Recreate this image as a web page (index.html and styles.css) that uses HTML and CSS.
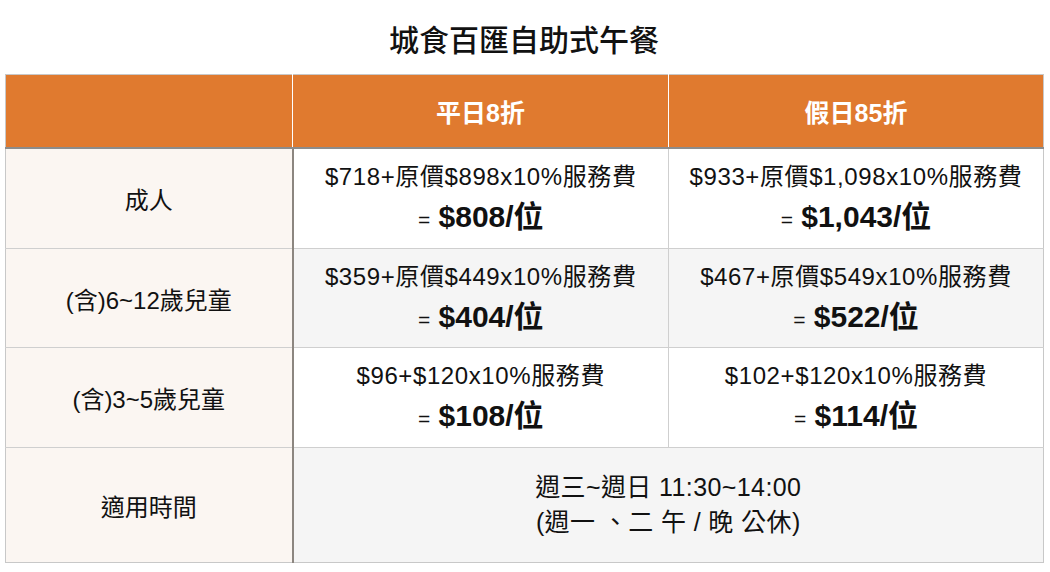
FILE: index.html
```html
<!DOCTYPE html>
<html lang="zh-Hant">
<head>
<meta charset="utf-8">
<link rel="stylesheet" href="styles.css">
</head>
<body>
<div class="page">
  <h1 class="title">城食百匯自助式午餐</h1>
  <table class="price">
    <colgroup>
      <col class="c1"><col class="c2"><col class="c3">
    </colgroup>
    <thead>
      <tr class="head">
        <th class="corner"></th>
        <th>平日8折</th>
        <th>假日85折</th>
      </tr>
    </thead>
    <tbody>
      <tr class="row">
        <th class="label">成人</th>
        <td><div class="calc">$718+原價$898x10%服務費</div><div class="total"><span class="eq">=</span> $808/位</div></td>
        <td><div class="calc">$933+原價$1,098x10%服務費</div><div class="total"><span class="eq">=</span> $1,043/位</div></td>
      </tr>
      <tr class="row alt">
        <th class="label">(含)6~12歲兒童</th>
        <td><div class="calc">$359+原價$449x10%服務費</div><div class="total"><span class="eq">=</span> $404/位</div></td>
        <td><div class="calc">$467+原價$549x10%服務費</div><div class="total"><span class="eq">=</span> $522/位</div></td>
      </tr>
      <tr class="row">
        <th class="label">(含)3~5歲兒童</th>
        <td><div class="calc">$96+$120x10%服務費</div><div class="total"><span class="eq">=</span> $108/位</div></td>
        <td><div class="calc">$102+$120x10%服務費</div><div class="total"><span class="eq">=</span> $114/位</div></td>
      </tr>
      <tr class="row time">
        <th class="label">適用時間</th>
        <td colspan="2"><div class="line">週三~週日 11:30~14:00</div><div class="line">(週一 、二 午 / 晚 公休)</div></td>
      </tr>
    </tbody>
  </table>
</div>
</body>
</html>
```
FILE: styles.css
```css
html, body {
  margin: 0;
  padding: 0;
  background: #ffffff;
}
body {
  font-family: "Liberation Sans", "Noto Sans CJK TC", sans-serif;
  color: #111;
}
.page {
  padding: 0 7px 0 5px;
}
.title {
  margin: 0;
  height: 74px;
  display: flex;
  align-items: center;
  justify-content: center;
  font-size: 30px;
  font-weight: 500;
  padding-top: 1px;
  box-sizing: border-box;
}
.price {
  width: 1038px;
  border-collapse: collapse;
  table-layout: fixed;
  border: 1px solid #c8c8c8;
}
.c1 { width: 287px; }
.c2 { width: 376px; }
.c3 { width: 375px; }
.head th {
  background: #e07a2f;
  color: #fff;
  height: 72px;
  font-size: 25px;
  font-weight: 700;
  border-left: 1px solid #fff;
  border-bottom: 2px solid #8c8c8c;
  padding: 0;
}
.head th.corner { border-left: none; }
.row th.label {
  background: #fbf6f2;
  font-weight: 400;
  font-size: 24px;
  border-right: 2px solid #8c8680;
  border-top: 1px solid #cfcfcf;
  padding: 0;
}
.row td {
  text-align: center;
  border-top: 1px solid #cfcfcf;
  border-left: 1px solid #cfcfcf;
  height: 91px;
  padding: 8px 0 0;
  background: #fff;
}
.row.alt td { background: #f5f5f5; height: 90px; }
.row.time td { background: #f5f5f5; height: 114px; padding-top: 0; }
.calc {
  font-size: 24px;
  line-height: 32px;
  letter-spacing: 0.6px;
}
.total {
  font-size: 30px;
  font-weight: 700;
  line-height: 48px;
}
.eq {
  font-size: 21px;
  font-weight: 400;
}
.line {
  font-size: 25px;
  line-height: 35px;
  letter-spacing: 0.4px;
}
```
